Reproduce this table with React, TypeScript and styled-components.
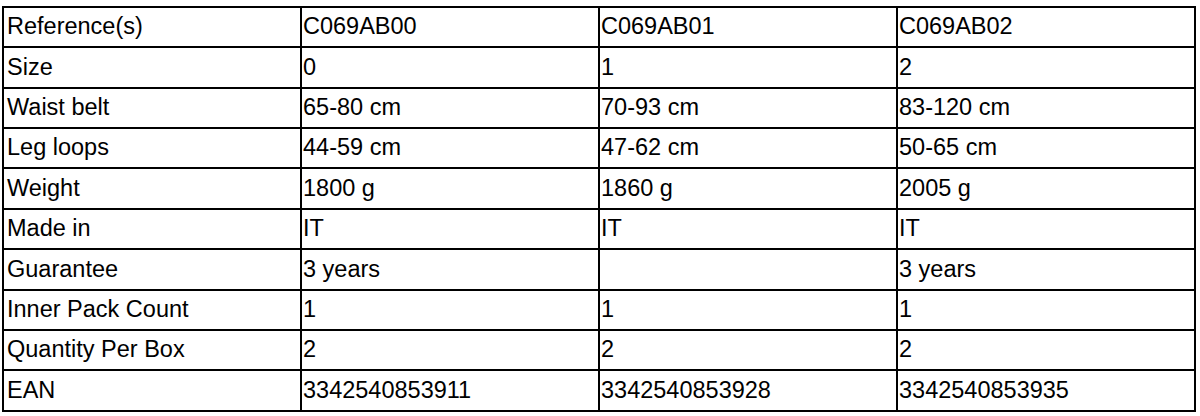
import React from "react";
import styled, { createGlobalStyle } from "styled-components";

const GlobalStyle = createGlobalStyle`
  html, body {
    margin: 0;
    padding: 0;
    background: #ffffff;
  }
  body {
    font-family: "Liberation Sans", Arial, sans-serif;
    color: #000000;
  }
`;

const Page = styled.div`
  padding: 6px 5px 0 2px;
`;

const Table = styled.table`
  width: 1194px;
  table-layout: fixed;
  border-collapse: separate;
  border-spacing: 0;
  border-top: 2px solid #000;
  border-left: 2px solid #000;
  font-family: "Liberation Sans", Arial, sans-serif;
  font-size: 23.5px;
  color: #000;
`;

const Row = styled.tr<{ $tall?: boolean }>`
  height: ${(p) => (p.$tall ? "41px" : "40px")};
`;

const Cell = styled.td<{ $label?: boolean }>`
  border-right: 2px solid #000;
  border-bottom: 2px solid #000;
  padding: 0 0 0 ${(p) => (p.$label ? "3px" : "1px")};
  vertical-align: middle;
  white-space: nowrap;
  overflow: hidden;
  line-height: 1;
`;

type RowData = [string, string, string, string];

const rows: RowData[] = [
  ["Reference(s)", "C069AB00", "C069AB01", "C069AB02"],
  ["Size", "0", "1", "2"],
  ["Waist belt", "65-80 cm", "70-93 cm", "83-120 cm"],
  ["Leg loops", "44-59 cm", "47-62 cm", "50-65 cm"],
  ["Weight", "1800 g", "1860 g", "2005 g"],
  ["Made in", "IT", "IT", "IT"],
  ["Guarantee", "3 years", "", "3 years"],
  ["Inner Pack Count", "1", "1", "1"],
  ["Quantity Per Box", "2", "2", "2"],
  ["EAN", "3342540853911", "3342540853928", "3342540853935"],
];

const tallRows = [1, 4, 6, 9];

export default function App() {
  return (
    <>
      <GlobalStyle />
      <Page>
        <Table>
          <tbody>
            {rows.map((r, i) => (
              <Row key={r[0]} $tall={tallRows.includes(i)}>
                <Cell $label>{r[0]}</Cell>
                <Cell>{r[1]}</Cell>
                <Cell>{r[2]}</Cell>
                <Cell>{r[3]}</Cell>
              </Row>
            ))}
          </tbody>
        </Table>
      </Page>
    </>
  );
}
